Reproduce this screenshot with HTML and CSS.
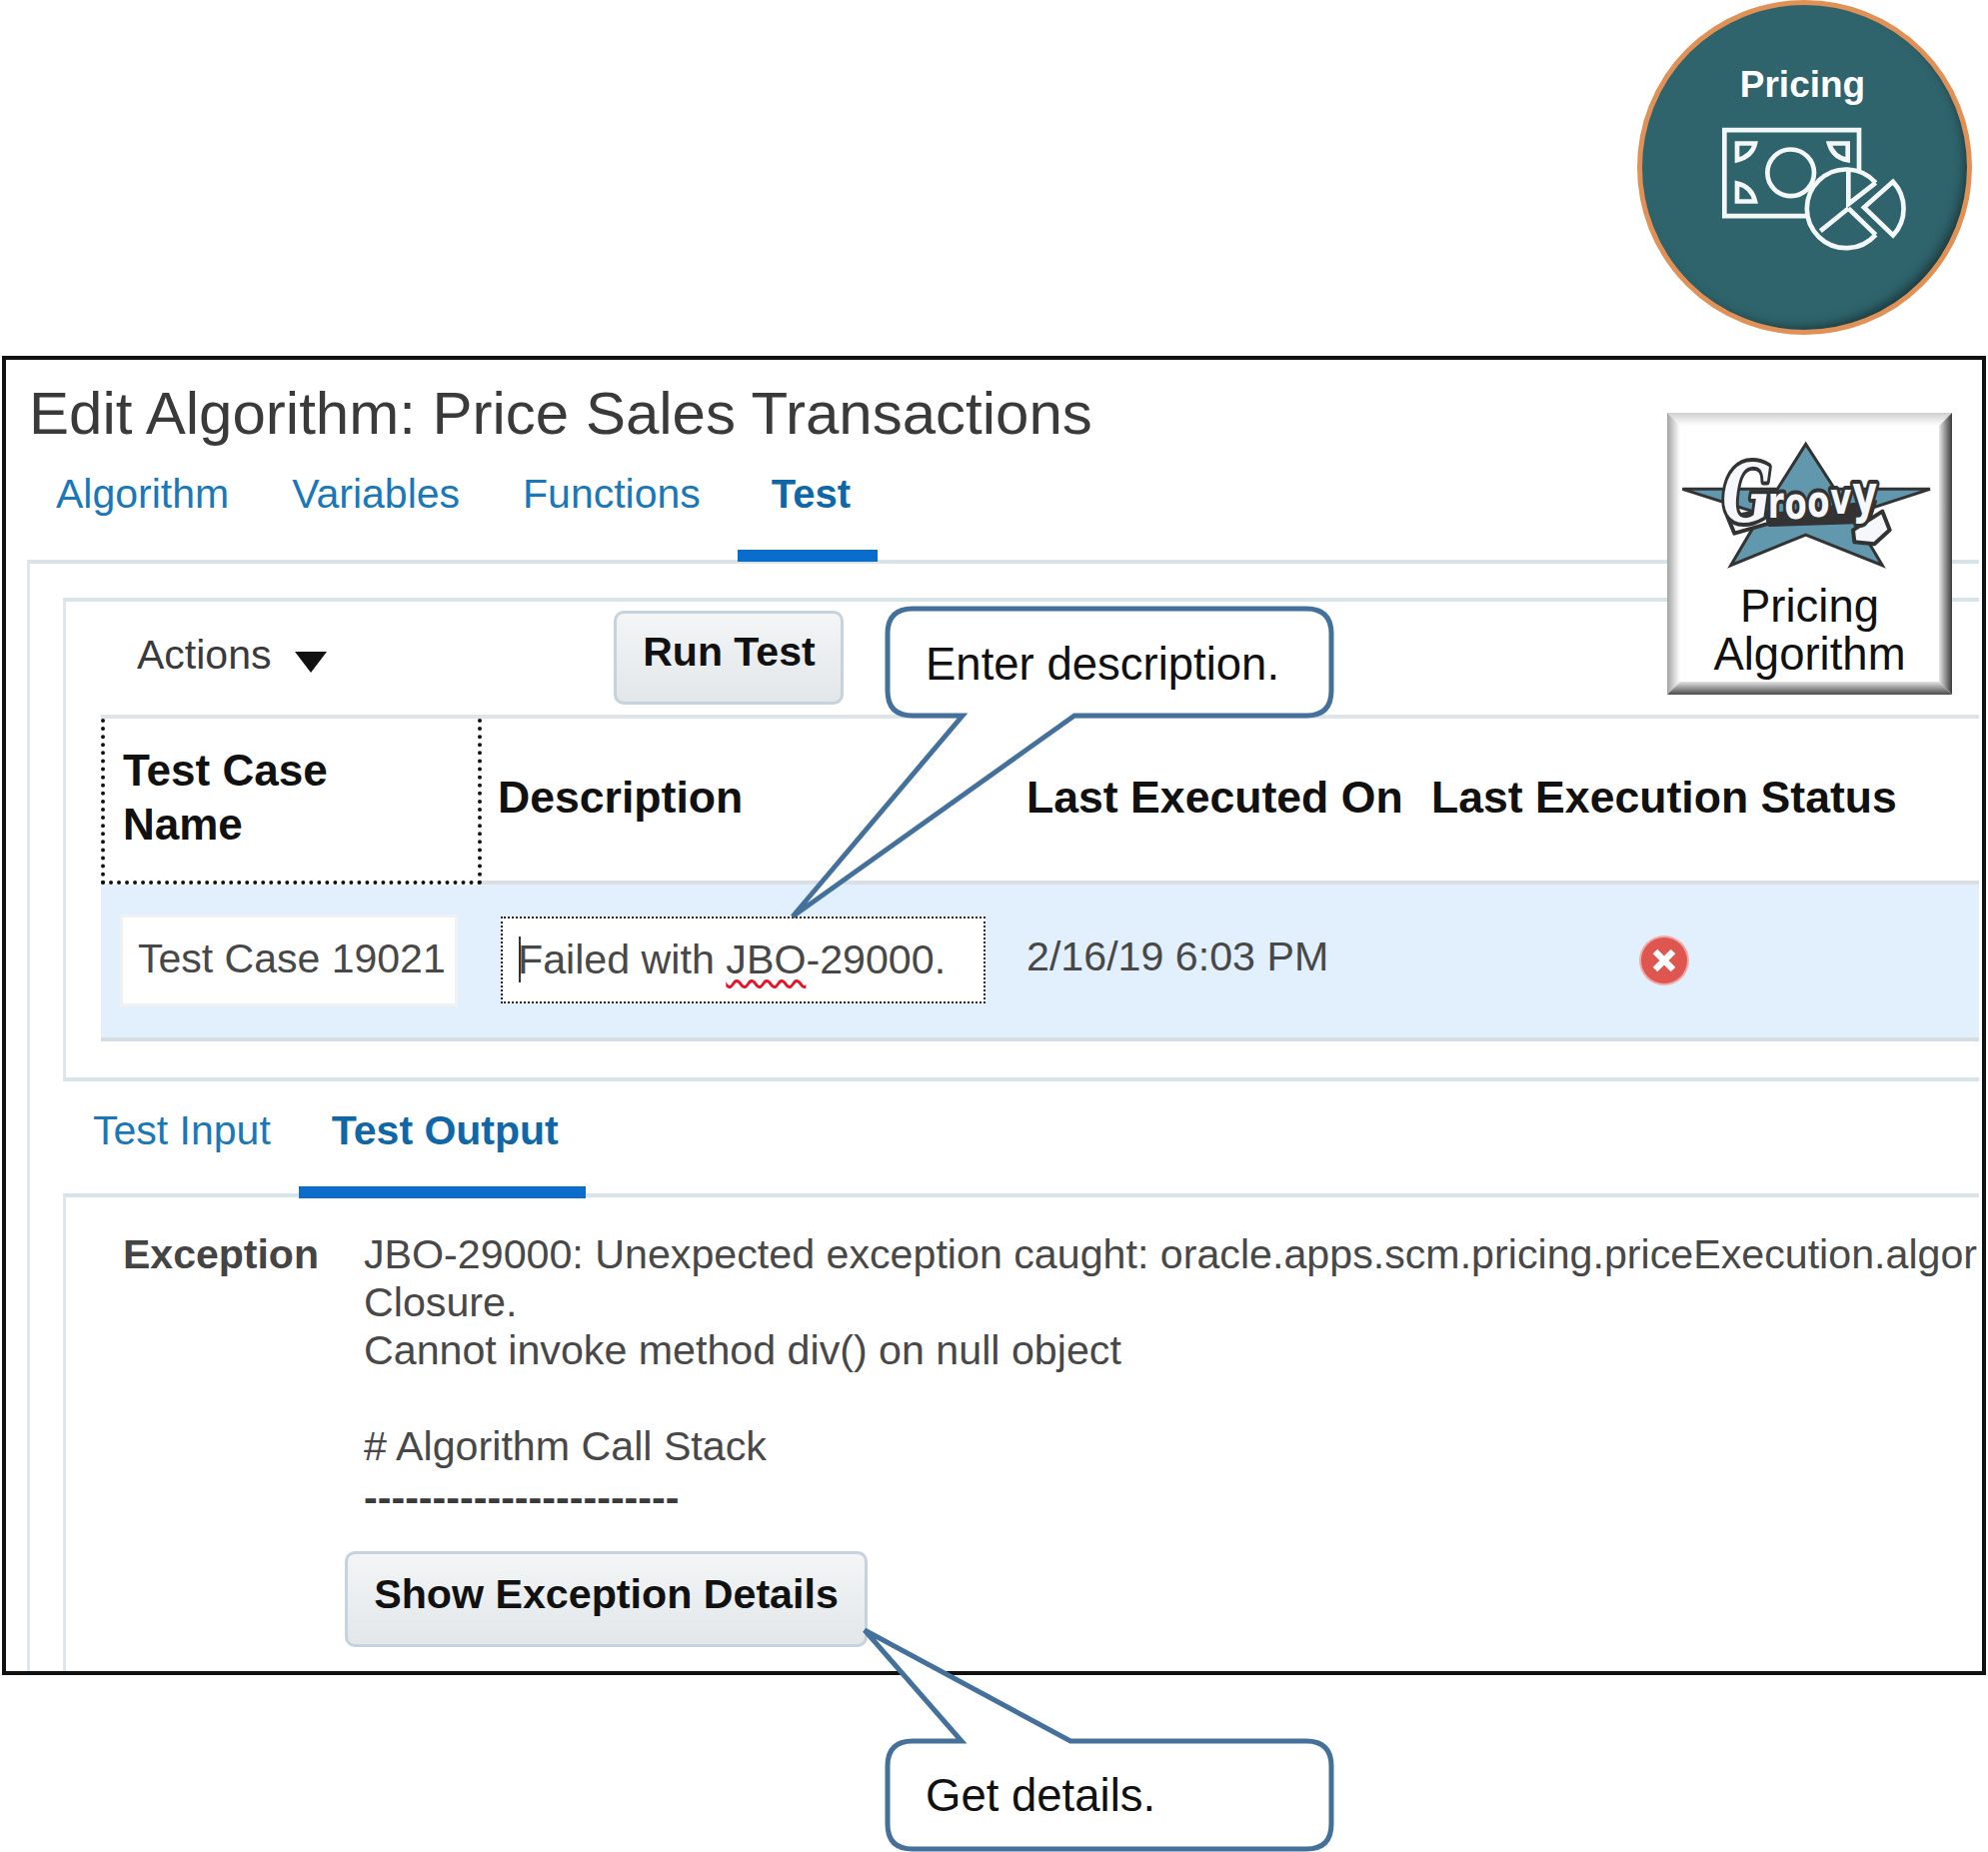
FILE: index.html
```html
<!DOCTYPE html>
<html lang="en">
<head>
<meta charset="utf-8">
<title>Edit Algorithm: Price Sales Transactions</title>
<link rel="stylesheet" href="styles.css">
</head>
<body>
<div class="page">
  <header class="hero">
    <div class="badge">
      <div class="badge-title">Pricing</div>
      <svg class="badge-icon" viewBox="300 375 570 380" aria-hidden="true">
        <g class="icon-line">
          <path d="M562 648H316V390H720V510"/>
          <path d="M354 430H408Q400 468 354 480Z"/>
          <path d="M630 430H686V480Q642 472 630 430Z"/>
          <path d="M354 550Q398 560 408 604H354Z"/>
          <circle cx="515" cy="518" r="70"/>
          <path d="M770 548A118 118 0 1 0 770 704" class="icon-pie"/>
          <path d="M688 510V612L770 548M688 625L770 704M688 625L604 693"/>
          <path d="M735 622L822 545A118 118 0 0 1 822 706Z"/>
        </g>
      </svg>
    </div>
  </header>

  <main class="frame">
    <h1 class="title">Edit Algorithm: Price Sales Transactions</h1>
    <nav class="tabs">
      <a class="tab">Algorithm</a>
      <a class="tab">Variables</a>
      <a class="tab">Functions</a>
      <a class="tab tab-active tab-test">Test</a>
    </nav>
    <section class="panel">
      <div class="box">
        <div class="toolbar">
          <span class="actions">Actions</span>
          <span class="caret-down"></span>
          <button class="btn btn-run">Run Test</button>
        </div>
        <div class="table">
          <div class="thead">
            <div class="th th-focus">Test Case<br>Name</div>
            <div class="th th-single">Description</div>
            <div class="th th-single">Last Executed On</div>
            <div class="th th-single">Last Execution Status</div>
          </div>
          <div class="trow">
            <div class="td"><div class="input input-name">Test Case 19021</div></div>
            <div class="td"><div class="input input-desc"><span class="text-caret"></span>Failed with <span class="spell">JBO</span>-29000.</div></div>
            <div class="td td-date">2/16/19 6:03 PM</div>
            <div class="td">
              <svg class="status" viewBox="0 0 50 50" aria-hidden="true">
                <circle cx="25" cy="25" r="25" fill="#f0aaa5"/>
                <circle cx="25" cy="25" r="23" fill="#df5550"/>
                <path d="M16 16L34 34M34 16L16 34" stroke="#fff" stroke-width="6.5"/>
              </svg>
            </div>
          </div>
        </div>
      </div>

      <nav class="tabs tabs-sub">
        <a class="tab tab-sub">Test Input</a>
        <a class="tab tab-sub tab-active tab-output">Test Output</a>
      </nav>
      <div class="output">
        <div class="output-label">Exception</div>
        <div class="output-body">
          <div class="message">JBO-29000: Unexpected exception caught: oracle.apps.scm.pricing.priceExecution.algor
Closure.
Cannot invoke method div() on null object

# Algorithm Call Stack
<span class="dashes">-----------------------</span></div>
          <button class="btn btn-details">Show Exception Details</button>
        </div>
      </div>
    </section>
  </main>

  <aside class="card">
    <svg class="bevel" viewBox="0 0 285 282" aria-hidden="true">
      <defs>
        <linearGradient id="bt" x1="0" y1="0" x2="0" y2="1"><stop offset="0" stop-color="#cfcfcf"/><stop offset="1" stop-color="#fff"/></linearGradient>
        <linearGradient id="bl" x1="0" y1="0" x2="1" y2="0"><stop offset="0" stop-color="#a4a4a4"/><stop offset="1" stop-color="#fff"/></linearGradient>
        <linearGradient id="br" x1="0" y1="0" x2="1" y2="0"><stop offset="0" stop-color="#e8e8e8"/><stop offset="1" stop-color="#3a3a3a"/></linearGradient>
        <linearGradient id="bb" x1="0" y1="0" x2="0" y2="1"><stop offset="0" stop-color="#e4e4e4"/><stop offset="1" stop-color="#4a4a4a"/></linearGradient>
      </defs>
      <polygon points="0,0 285,0 272,13 13,13" fill="url(#bt)"/>
      <polygon points="0,0 13,13 13,269 0,282" fill="url(#bl)"/>
      <polygon points="285,0 285,282 272,269 272,13" fill="url(#br)"/>
      <polygon points="0,282 13,269 272,269 285,282" fill="url(#bb)"/>
    </svg>
    <svg class="groovy" viewBox="0 0 810 405" aria-hidden="true">
      <polygon class="star" points="410,28 497,163 783,163 549,239 640,392 410,300 185,392 276,238 40,163 325,163"/>
      <polygon class="ribbon" points="176,248 290,226 300,266 196,296"/>
      <polygon class="ribbon-dark" points="290,240 620,200 600,262 300,272"/>
      <polygon class="ribbon" points="552,286 640,230 662,286 616,328 556,322"/>
      <text class="groovy-word" transform="scale(.72 1)"><tspan class="groovy-g" x="222" y="262">G</tspan><tspan x="411" y="250">r</tspan><tspan x="481" y="252">o</tspan><tspan x="576" y="246">o</tspan><tspan x="672" y="238">v</tspan><tspan class="groovy-y" x="764" y="234">y</tspan></text>
    </svg>
    <div class="card-label">Pricing<br>Algorithm</div>
  </aside>

  <div class="callout callout-top">
    <svg class="callout-shape" width="449" height="111" aria-hidden="true">
      <path d="M28 2H422Q447 2 447 27V84Q447 109 422 109H190L-92 310L78 109H28Q3 109 3 84V27Q3 2 28 2Z"/>
    </svg>
    <span class="callout-text">Enter description.</span>
  </div>
  <div class="callout callout-bottom">
    <svg class="callout-shape" width="449" height="112" aria-hidden="true">
      <path d="M28 2H77L-20 -109L186 2H422Q447 2 447 27V85Q447 110 422 110H28Q3 110 3 85V27Q3 2 28 2Z"/>
    </svg>
    <span class="callout-text">Get details.</span>
  </div>
</div>
</body>
</html>
```

FILE: styles.css
```css
* { box-sizing: border-box; }
html, body { margin: 0; padding: 0; background: #fff; }
body { font-family: "Liberation Sans", Arial, sans-serif; color: #444; }

.page { position: relative; width: 1989px; height: 1853px; overflow: hidden; background: #fff; }

/* Top badge */
.hero { height: 356px; display: flex; justify-content: flex-end; padding-right: 16px; }
.badge {
  width: 335px; height: 335px; border-radius: 50%;
  border: 5px solid #e29156; background: #2f646c;
  box-shadow: inset -7px -7px 12px -6px rgba(0,0,0,.5);
  display: flex; flex-direction: column; padding-top: 58px;
}
.badge-title { font-weight: 700; font-size: 37px; line-height: 44px; color: #fff; text-align: center; padding-right: 4px; }
.badge-icon { width: 190px; height: 127px; margin: 18px 0 0 77px; display: block; }
.icon-line { fill: none; stroke: #fff; stroke-width: 14; stroke-linejoin: miter; opacity: .95; }
.icon-pie { fill: #2f646c; }

/* Screenshot frame */
.frame {
  margin-left: 2px; width: 1985px; height: 1320px;
  border: 4px solid #111; background: #fff;
  padding: 19px 3px 0 21px; overflow: hidden;
  display: flex; flex-direction: column;
}
.title { margin: 0 0 0 2px; font-weight: 400; font-size: 60px; line-height: 70px; color: #3a3a3a; white-space: nowrap; }

.tabs { display: flex; margin: 20px 0 0 -2px; height: 91px; }
.tab { position: relative; display: block; height: 100%; padding: 0 32px 0 31px; font-size: 41px; line-height: 50px; color: #1b78b8; white-space: nowrap; }
.tab-active { font-weight: 700; color: #0f67a8; }
.tab-active::after { content: ""; position: absolute; left: 0; right: 0; bottom: -2px; height: 12px; background: #0a6ccb; z-index: 1; }
.tab-test { margin-left: 5px; padding: 0 27px 0 34px; font-size: 40px; }

.panel { flex: 1; min-height: 0; border-top: 4px solid #d9e3ea; border-left: 3px solid #dde6ed; padding: 34px 0 0 33px; display: flex; flex-direction: column; }

.box { border-top: 4px solid #d9e3ea; border-left: 3px solid #dde6ed; border-bottom: 4px solid #d9e3ea; padding: 0 0 36px 35px; flex: none; }

.toolbar { height: 113px; display: flex; align-items: flex-start; margin-left: -35px; padding-left: 71px; }
.actions { margin-top: 28px; font-size: 41px; line-height: 50px; color: #3a3a3a; }
.caret-down { margin: 50px 0 0 24px; width: 0; height: 0; border-left: 16px solid transparent; border-right: 16px solid transparent; border-top: 21px solid #111; }

.btn {
  display: flex; align-items: center; justify-content: center;
  font-family: inherit; font-weight: 700; font-size: 41px; color: #111;
  background: linear-gradient(#f3f5f6, #e3e7ea);
  border: 3px solid #c6d2dc; border-radius: 10px; padding: 0 0 11px; margin: 0;
}
.btn-run { margin: 9px 0 0 287px; width: 230px; height: 94px; }
.btn-details { margin: 30px 0 0 -19px; width: 523px; height: 96px; font-size: 41.2px; padding-bottom: 10px; }

.table { border-top: 4px solid #dde4ea; }
.thead, .trow { display: grid; grid-template-columns: 381px 529px 405px 1fr; }
.thead { height: 166px; border-bottom: 4px solid #d9dfe4; }
.th { font-weight: 700; font-size: 44.6px; line-height: 54px; color: #111; white-space: nowrap; }
.th-focus { margin-bottom: -4px; padding: 25px 0 0 18px; font-size: 44px; border: 4px dotted #111; border-top: 0; background: #fff; }
.th-single { padding: 52px 0 0 16px; }

.trow { height: 157px; background: #e2f0fd; border-bottom: 4px solid #d5dde3; }
.td { font-size: 41.2px; }
.input { background: #fff; white-space: nowrap; display: flex; align-items: center; color: #484848; }
.input-name { margin: 30px 0 0 19px; width: 338px; height: 92px; padding: 0 0 4px 15px; font-size: 41px; border: 3px solid #eff1f3; }
.input-desc { position: relative; margin: 32px 0 0 19px; width: 485px; height: 87px; padding: 0 0 3px 15px; border: 2px dotted #222; display: block; line-height: 82px; white-space: pre; }
.text-caret { position: absolute; left: 16px; top: 18px; width: 2px; height: 46px; background: #333; }
.spell { text-decoration: underline wavy #e8132b 3px; text-underline-offset: 6px; }
.td-date { margin-left: 0; padding: 47px 0 0 16px; line-height: 50px; color: #484848; }
.status { display: block; width: 50px; height: 50px; margin: 51px 0 0 224px; }

.tabs-sub { margin: 24px 0 0; height: 88px; flex: none; }
.tab-sub { padding: 0 28px 0 30px; font-size: 41px; }
.tab-output { padding: 0 27px 0 33px; }
.tab-output::after { bottom: -5px; }

.output { flex: 1; min-height: 0; border-top: 4px solid #d9e3ea; border-left: 3px solid #dde6ed; padding-top: 33px; display: grid; grid-template-columns: 298px 1fr; overflow: hidden; }
.output-label { padding-left: 57px; font-weight: 700; font-size: 41px; line-height: 48px; color: #444; }
.output-body { min-width: 0; }
.message { font-size: 41.2px; line-height: 48px; color: #484848; white-space: pre; overflow: hidden; }
.dashes { font-weight: 700; color: #3a3a3a; vertical-align: -3px; }

/* Overlaid artwork */
.card { position: absolute; left: 1668px; top: 413px; width: 285px; height: 282px; background: #fff; padding: 22px 0 0 2px; z-index: 3; }
.bevel { position: absolute; left: 0; top: 0; width: 285px; height: 282px; }
.groovy { position: relative; display: block; width: 270px; height: 135px; }
.star { fill: #6198ae; stroke: #333; stroke-width: 9; stroke-linejoin: miter; }
.ribbon { fill: #f6f7fa; stroke: #333; stroke-width: 12; stroke-linejoin: round; }
.ribbon-dark { fill: #333; stroke: #333; stroke-width: 8; stroke-linejoin: round; }
.groovy-word { font-family: "DejaVu Sans", sans-serif; font-weight: 700; font-size: 135px; fill: #f6f7fa; stroke: #333; stroke-width: 24px; paint-order: stroke; stroke-linejoin: round; }
.groovy-g { font-family: "DejaVu Serif", serif; font-style: italic; font-size: 240px; }
.groovy-y { font-size: 160px; }
.card-label { position: relative; margin: 13px 0 0 -2px; text-align: center; font-size: 45.5px; line-height: 48px; color: #111; }

.callout { position: absolute; left: 885px; width: 449px; z-index: 4; padding: 33px 0 0 41px; }
.callout-top { top: 607px; height: 111px; }
.callout-bottom { top: 1740px; height: 112px; padding-top: 32px; }
.callout-shape { position: absolute; left: 0; top: 0; overflow: visible; }
.callout-shape path { fill: #fff; stroke: #44719c; stroke-width: 5; stroke-linejoin: miter; }
.callout-text { position: relative; display: block; font-size: 45.5px; line-height: 50px; color: #111; white-space: nowrap; }
```
